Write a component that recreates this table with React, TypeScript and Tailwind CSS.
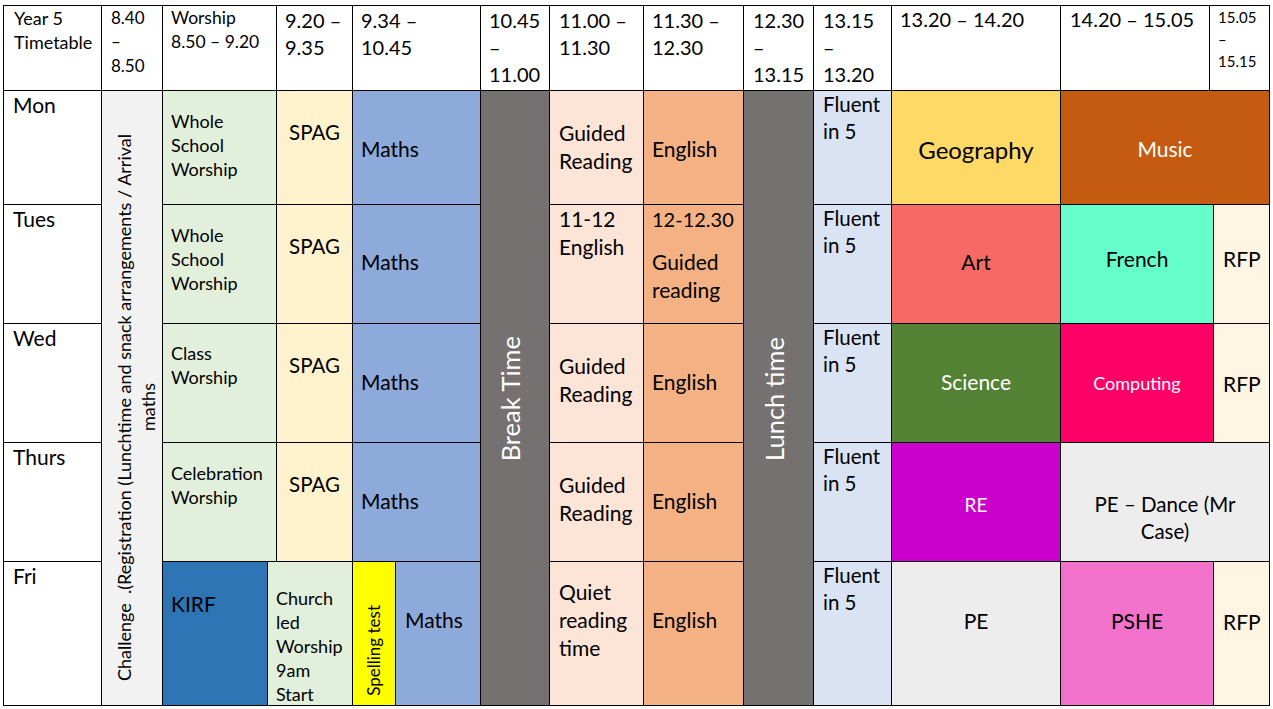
import React from "react";

export default function App() {
  return (
    <div className="min-h-screen bg-white text-black [font-family:Lato,sans-serif]">
      <div className="pl-[3px] pt-[5px]">
        <div className="grid w-fit gap-px bg-black p-px grid-cols-[97px_60px_104px_8px_75px_42px_84px_68px_93px_99px_69px_77px_168px_148px_3px_55px] grid-rows-[84px_113px_118px_118px_118px_143px]">
          {/* Header row */}
          <div className="col-start-1 col-end-2 row-start-1 row-end-2 bg-white pl-[10px] text-[18px] leading-[24px] whitespace-nowrap">
            Year 5<br />Timetable
          </div>
          <div className="col-start-2 col-end-3 row-start-1 row-end-2 bg-white pl-[9px] text-[17px] leading-[24px] whitespace-nowrap">
            8.40<br />–<br />8.50
          </div>
          <div className="col-start-3 col-end-5 row-start-1 row-end-2 bg-white pl-[8px] text-[17.5px] leading-[24px] whitespace-nowrap">
            Worship<br />8.50 – 9.20
          </div>
          <div className="col-start-5 col-end-6 row-start-1 row-end-2 bg-white pl-[8px] pt-[1px] text-[20px] leading-[27px] whitespace-nowrap">
            9.20 –<br />9.35
          </div>
          <div className="col-start-6 col-end-8 row-start-1 row-end-2 bg-white pl-[8px] pt-[1px] text-[20px] leading-[27px] whitespace-nowrap">
            9.34 –<br />10.45
          </div>
          <div className="col-start-8 col-end-9 row-start-1 row-end-2 bg-white pl-[8px] pt-[1px] text-[20px] leading-[27px] whitespace-nowrap">
            10.45<br />–<br />11.00
          </div>
          <div className="col-start-9 col-end-10 row-start-1 row-end-2 bg-white pl-[9px] pt-[1px] text-[20px] leading-[27px] whitespace-nowrap">
            11.00 –<br />11.30
          </div>
          <div className="col-start-10 col-end-11 row-start-1 row-end-2 bg-white pl-[8px] pt-[1px] text-[20px] leading-[27px] whitespace-nowrap">
            11.30 –<br />12.30
          </div>
          <div className="col-start-11 col-end-12 row-start-1 row-end-2 bg-white pl-[9px] pt-[1px] text-[20px] leading-[27px] whitespace-nowrap">
            12.30<br />–<br />13.15
          </div>
          <div className="col-start-12 col-end-13 row-start-1 row-end-2 bg-white pl-[9px] pt-[1px] text-[20px] leading-[27px] whitespace-nowrap">
            13.15<br />–<br />13.20
          </div>
          <div className="col-start-13 col-end-14 row-start-1 row-end-2 bg-white pl-[8px] text-[20px] leading-[27px] whitespace-nowrap">
            13.20 – 14.20
          </div>
          <div className="col-start-14 col-end-15 row-start-1 row-end-2 bg-white pl-[9px] text-[20px] leading-[27px] whitespace-nowrap">
            14.20 – 15.05
          </div>
          <div className="col-start-15 col-end-17 row-start-1 row-end-2 bg-white pl-[8px] text-[15px] leading-[22px] whitespace-nowrap">
            15.05<br />–<br />15.15
          </div>

          {/* Day labels */}
          <div className="col-start-1 col-end-2 row-start-2 row-end-3 bg-white pl-[9px] text-[21px] leading-[28px]">Mon</div>
          <div className="col-start-1 col-end-2 row-start-3 row-end-4 bg-white pl-[9px] text-[21px] leading-[28px]">Tues</div>
          <div className="col-start-1 col-end-2 row-start-4 row-end-5 bg-white pl-[9px] text-[21px] leading-[28px]">Wed</div>
          <div className="col-start-1 col-end-2 row-start-5 row-end-6 bg-white pl-[9px] text-[21px] leading-[28px]">Thurs</div>
          <div className="col-start-1 col-end-2 row-start-6 row-end-7 bg-white pl-[9px] text-[21px] leading-[28px]">Fri</div>

          {/* Registration column */}
          <div className="col-start-2 col-end-3 row-start-2 row-end-7 flex items-center justify-start bg-[#f2f2f2] pl-[10px] pt-[18px]">
            <div className="rotate-180 text-center text-[18px] leading-[24px] whitespace-nowrap [writing-mode:vertical-rl]">
              {"Challenge\u00a0 .(Registration (Lunchtime and snack arrangements / Arrival"}
              <br />
              maths
            </div>
          </div>

          {/* Worship column Mon-Thu */}
          <div className="col-start-3 col-end-5 row-start-2 row-end-3 bg-[#e2efda] pl-[8px] pt-[18px] text-[18px] leading-[24px] whitespace-nowrap">
            Whole<br />School<br />Worship
          </div>
          <div className="col-start-3 col-end-5 row-start-3 row-end-4 bg-[#e2efda] pl-[8px] pt-[18px] text-[18px] leading-[24px] whitespace-nowrap">
            Whole<br />School<br />Worship
          </div>
          <div className="col-start-3 col-end-5 row-start-4 row-end-5 bg-[#e2efda] pl-[8px] pt-[17px] text-[18px] leading-[24px] whitespace-nowrap">
            Class<br />Worship
          </div>
          <div className="col-start-3 col-end-5 row-start-5 row-end-6 bg-[#e2efda] pl-[8px] pt-[18px] text-[18px] leading-[24px] whitespace-nowrap">
            Celebration<br />Worship
          </div>

          {/* SPAG Mon-Thu */}
          <div className="col-start-5 col-end-6 row-start-2 row-end-3 bg-[#fff2cc] pt-[27px] text-center text-[20.5px] leading-[28px]">SPAG</div>
          <div className="col-start-5 col-end-6 row-start-3 row-end-4 bg-[#fff2cc] pt-[27px] text-center text-[20.5px] leading-[28px]">SPAG</div>
          <div className="col-start-5 col-end-6 row-start-4 row-end-5 bg-[#fff2cc] pt-[27px] text-center text-[20.5px] leading-[28px]">SPAG</div>
          <div className="col-start-5 col-end-6 row-start-5 row-end-6 bg-[#fff2cc] pt-[27px] text-center text-[20.5px] leading-[28px]">SPAG</div>

          {/* Maths Mon-Thu */}
          <div className="col-start-6 col-end-8 row-start-2 row-end-3 bg-[#8eaadb] pl-[8px] pt-[44px] text-[21px] leading-[28px]">Maths</div>
          <div className="col-start-6 col-end-8 row-start-3 row-end-4 bg-[#8eaadb] pl-[8px] pt-[43px] text-[21px] leading-[28px]">Maths</div>
          <div className="col-start-6 col-end-8 row-start-4 row-end-5 bg-[#8eaadb] pl-[8px] pt-[44px] text-[21px] leading-[28px]">Maths</div>
          <div className="col-start-6 col-end-8 row-start-5 row-end-6 bg-[#8eaadb] pl-[8px] pt-[44px] text-[21px] leading-[28px]">Maths</div>

          {/* Friday morning */}
          <div className="col-start-3 col-end-4 row-start-6 row-end-7 bg-[#2e75b6] pl-[8px] pt-[28px] text-[21px] leading-[28px]">KIRF</div>
          <div className="col-start-4 col-end-6 row-start-6 row-end-7 bg-[#e2efda] pl-[8px] pt-[24px] text-[18px] leading-[24px] whitespace-nowrap">
            Church<br />led<br />Worship<br />9am<br />Start
          </div>
          <div className="col-start-6 col-end-7 row-start-6 row-end-7 flex items-end justify-center bg-[#ffff00] pb-[9px]">
            <div className="rotate-180 text-[17px] leading-[24px] whitespace-nowrap [writing-mode:vertical-rl]">Spelling test</div>
          </div>
          <div className="col-start-7 col-end-8 row-start-6 row-end-7 bg-[#8eaadb] pl-[9px] pt-[44px] text-[21px] leading-[28px]">Maths</div>

          {/* Break Time */}
          <div className="col-start-8 col-end-9 row-start-2 row-end-7 flex items-center justify-center bg-[#767171] pr-[10px] pt-[2px]">
            <div className="rotate-180 text-[25.5px] leading-[31px] text-white whitespace-nowrap [writing-mode:vertical-rl]">Break Time</div>
          </div>

          {/* Guided reading column */}
          <div className="col-start-9 col-end-10 row-start-2 row-end-3 bg-[#fce4d6] pl-[9px] pt-[28px] text-[21px] leading-[28px] whitespace-nowrap">
            Guided<br />Reading
          </div>
          <div className="col-start-9 col-end-10 row-start-3 row-end-4 bg-[#fce4d6] pl-[9px] text-[21px] leading-[28px] whitespace-nowrap">
            11-12<br />English
          </div>
          <div className="col-start-9 col-end-10 row-start-4 row-end-5 bg-[#fce4d6] pl-[9px] pt-[28px] text-[21px] leading-[28px] whitespace-nowrap">
            Guided<br />Reading
          </div>
          <div className="col-start-9 col-end-10 row-start-5 row-end-6 bg-[#fce4d6] pl-[9px] pt-[28px] text-[21px] leading-[28px] whitespace-nowrap">
            Guided<br />Reading
          </div>
          <div className="col-start-9 col-end-10 row-start-6 row-end-7 bg-[#fce4d6] pl-[9px] pt-[16px] text-[21px] leading-[28px] whitespace-nowrap">
            Quiet<br />reading<br />time
          </div>

          {/* English column */}
          <div className="col-start-10 col-end-11 row-start-2 row-end-3 bg-[#f4b183] pl-[8px] pt-[44px] text-[21px] leading-[28px]">English</div>
          <div className="col-start-10 col-end-11 row-start-3 row-end-4 bg-[#f4b183] pl-[8px] text-[21px] leading-[28px] whitespace-nowrap">
            <div className="text-[20px]">12-12.30</div>
            <div className="mt-[15px]">
              Guided<br />reading
            </div>
          </div>
          <div className="col-start-10 col-end-11 row-start-4 row-end-5 bg-[#f4b183] pl-[8px] pt-[44px] text-[21px] leading-[28px]">English</div>
          <div className="col-start-10 col-end-11 row-start-5 row-end-6 bg-[#f4b183] pl-[8px] pt-[44px] text-[21px] leading-[28px]">English</div>
          <div className="col-start-10 col-end-11 row-start-6 row-end-7 bg-[#f4b183] pl-[8px] pt-[44px] text-[21px] leading-[28px]">English</div>

          {/* Lunch time */}
          <div className="col-start-11 col-end-12 row-start-2 row-end-7 flex items-center justify-center bg-[#767171] pr-[8px] pt-[2px]">
            <div className="rotate-180 text-[25.5px] leading-[31px] text-white whitespace-nowrap [writing-mode:vertical-rl]">Lunch time</div>
          </div>

          {/* Fluent in 5 */}
          <div className="col-start-12 col-end-13 row-start-2 row-end-3 bg-[#dae3f3] pl-[9px] text-[20.5px] leading-[27px] whitespace-nowrap">Fluent<br />in 5</div>
          <div className="col-start-12 col-end-13 row-start-3 row-end-4 bg-[#dae3f3] pl-[9px] text-[20.5px] leading-[27px] whitespace-nowrap">Fluent<br />in 5</div>
          <div className="col-start-12 col-end-13 row-start-4 row-end-5 bg-[#dae3f3] pl-[9px] text-[20.5px] leading-[27px] whitespace-nowrap">Fluent<br />in 5</div>
          <div className="col-start-12 col-end-13 row-start-5 row-end-6 bg-[#dae3f3] pl-[9px] text-[20.5px] leading-[27px] whitespace-nowrap">Fluent<br />in 5</div>
          <div className="col-start-12 col-end-13 row-start-6 row-end-7 bg-[#dae3f3] pl-[9px] text-[20.5px] leading-[27px] whitespace-nowrap">Fluent<br />in 5</div>

          {/* Afternoon: Mon */}
          <div className="col-start-13 col-end-14 row-start-2 row-end-3 bg-[#ffd966] pt-[44px] text-center text-[24px] leading-[30px]">Geography</div>
          <div className="col-start-14 col-end-17 row-start-2 row-end-3 bg-[#c55a11] pt-[44px] text-center text-[21px] leading-[28px] text-white">Music</div>

          {/* Tues */}
          <div className="col-start-13 col-end-14 row-start-3 row-end-4 bg-[#f76a66] pt-[43px] text-center text-[21px] leading-[28px]">Art</div>
          <div className="col-start-14 col-end-16 row-start-3 row-end-4 bg-[#66ffcc] pt-[40px] text-center text-[21px] leading-[28px]">French</div>
          <div className="col-start-16 col-end-17 row-start-3 row-end-4 bg-[#fff5e2] pl-[9px] pt-[40px] text-[21px] leading-[28px]">RFP</div>

          {/* Wed */}
          <div className="col-start-13 col-end-14 row-start-4 row-end-5 bg-[#548235] pt-[44px] text-center text-[21px] leading-[28px] text-white">Science</div>
          <div className="col-start-14 col-end-16 row-start-4 row-end-5 bg-[#ff0066] pt-[47px] text-center text-[18px] leading-[24px] text-white">Computing</div>
          <div className="col-start-16 col-end-17 row-start-4 row-end-5 bg-[#fff5e2] pl-[9px] pt-[46px] text-[21px] leading-[28px]">RFP</div>

          {/* Thurs */}
          <div className="col-start-13 col-end-14 row-start-5 row-end-6 bg-[#cc00cc] pt-[48px] text-center text-[19px] leading-[28px] text-white">RE</div>
          <div className="col-start-14 col-end-17 row-start-5 row-end-6 bg-[#ededed] pt-[48px] text-center text-[20.5px] leading-[27px] whitespace-nowrap">
            PE – Dance (Mr<br />Case)
          </div>

          {/* Fri */}
          <div className="col-start-13 col-end-14 row-start-6 row-end-7 bg-[#ededed] pt-[45px] text-center text-[21px] leading-[28px]">PE</div>
          <div className="col-start-14 col-end-16 row-start-6 row-end-7 bg-[#f272cc] pt-[45px] text-center text-[21px] leading-[28px]">PSHE</div>
          <div className="col-start-16 col-end-17 row-start-6 row-end-7 bg-[#fff5e2] pl-[9px] pt-[46px] text-[21px] leading-[28px]">RFP</div>
        </div>
      </div>
    </div>
  );
}
